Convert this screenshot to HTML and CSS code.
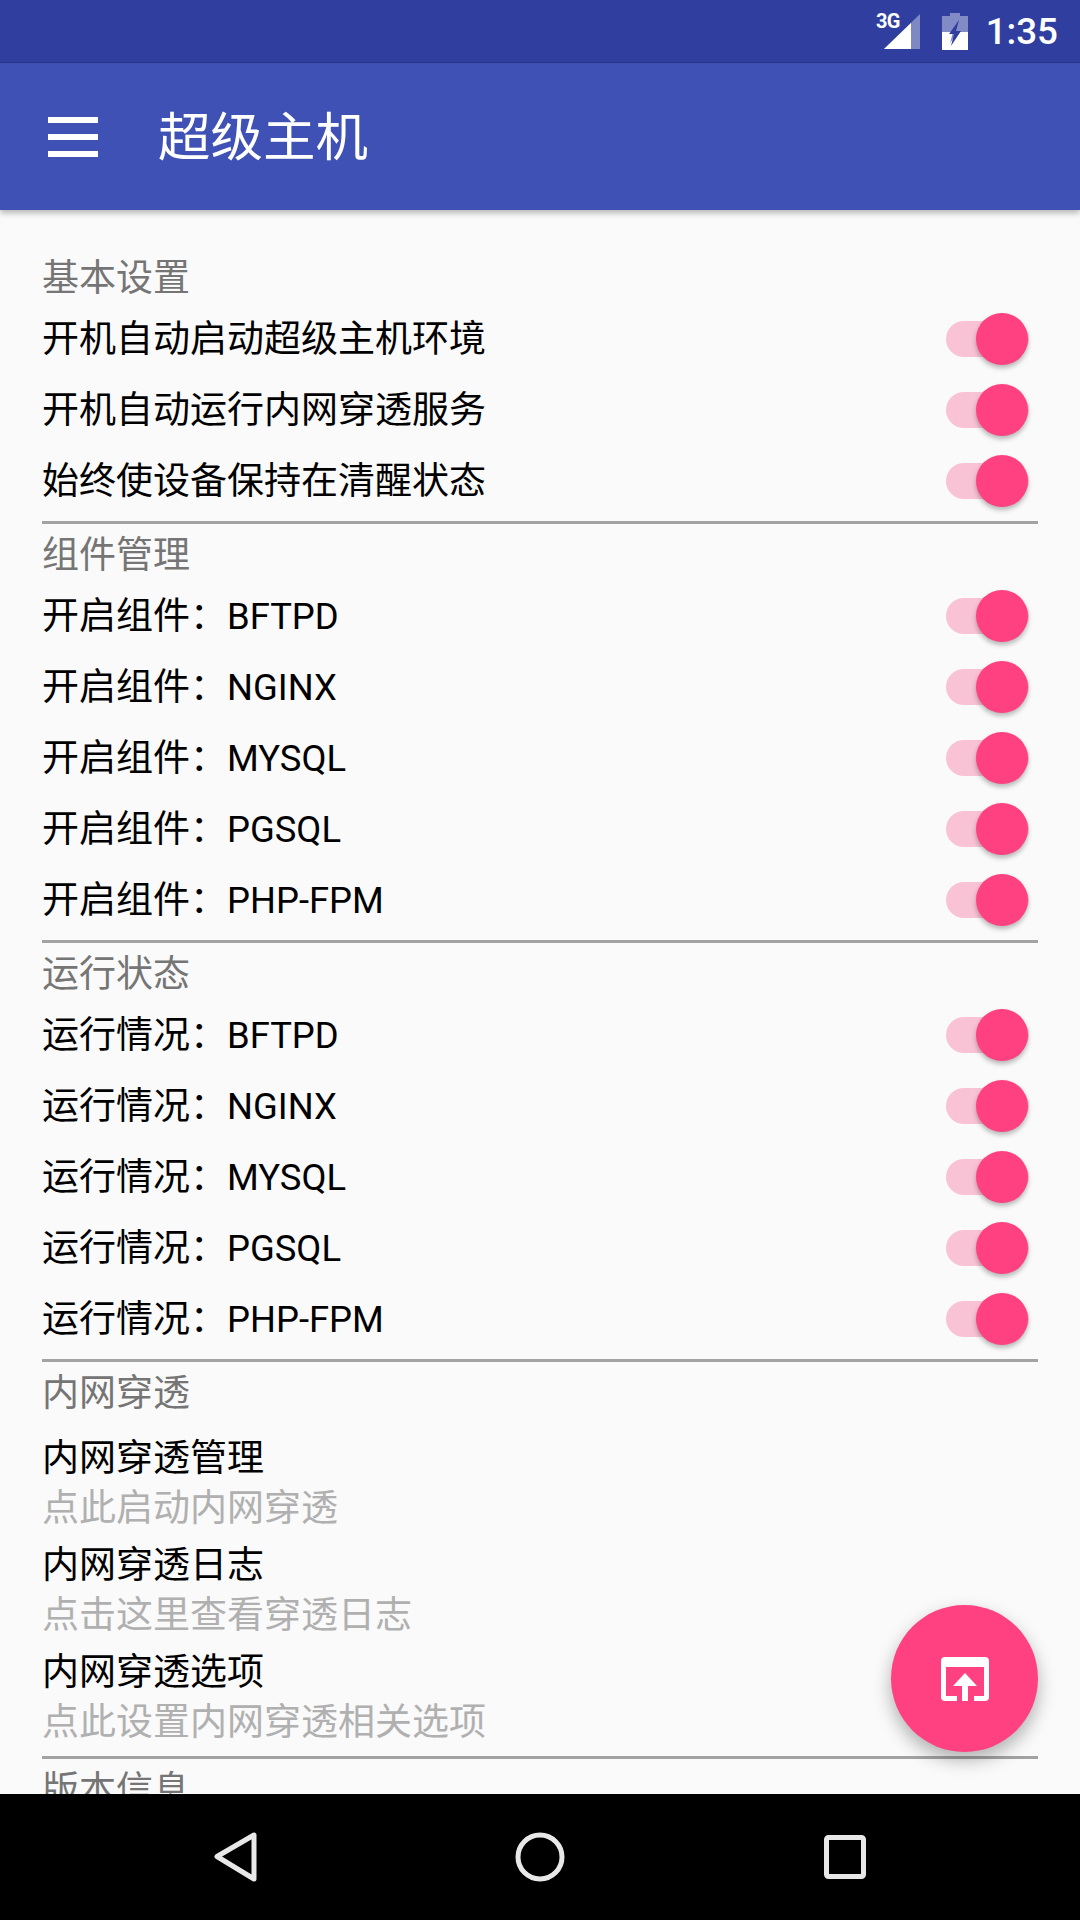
FILE: index.html
```html
<!DOCTYPE html>
<html lang="zh-CN">
<head>
<meta charset="utf-8">
<title>超级主机</title>
<link rel="stylesheet" href="styles.css">
</head>
<body>
<div class="phone">
  <header class="status">
    <span class="net">3G</span>
    <svg class="signal" width="40" height="36" viewBox="0 0 40 36"><path d="M4 36 40 1V36Z" fill="#fff" fill-opacity=".38"/><path d="M4 36 31 10V36Z" fill="#fff"/></svg>
    <svg class="battery" width="26" height="37" viewBox="0 0 26 37"><path d="M8 0h10v3h8v34H0V3h8Z" fill="#fff" fill-opacity=".4"/><path d="M0 19h11l-3 11 8-11h10v18H0Z" fill="#fff"/><path d="M17 7 7 21h5L9 33l10-15h-5l3-11Z" fill="#303f9f"/></svg>
    <span class="time">1:35</span>
  </header>
  <div class="appbar">
    <span class="menu"><i></i><i></i><i></i></span>
    <h1 class="title">超级主机</h1>
  </div>
  <main class="content">
    <section class="group first">
      <h2 class="group-title">基本设置</h2>
      <div class="row"><span class="label">开机自动启动超级主机环境</span><span class="switch"></span></div>
      <div class="row"><span class="label">开机自动运行内网穿透服务</span><span class="switch"></span></div>
      <div class="row"><span class="label">始终使设备保持在清醒状态</span><span class="switch"></span></div>
    </section>
    <section class="group">
      <h2 class="group-title">组件管理</h2>
      <div class="row"><span class="label">开启组件：<span class="latin">BFTPD</span></span><span class="switch"></span></div>
      <div class="row"><span class="label">开启组件：<span class="latin">NGINX</span></span><span class="switch"></span></div>
      <div class="row"><span class="label">开启组件：<span class="latin">MYSQL</span></span><span class="switch"></span></div>
      <div class="row"><span class="label">开启组件：<span class="latin">PGSQL</span></span><span class="switch"></span></div>
      <div class="row"><span class="label">开启组件：<span class="latin">PHP-FPM</span></span><span class="switch"></span></div>
    </section>
    <section class="group">
      <h2 class="group-title">运行状态</h2>
      <div class="row"><span class="label">运行情况：<span class="latin">BFTPD</span></span><span class="switch"></span></div>
      <div class="row"><span class="label">运行情况：<span class="latin">NGINX</span></span><span class="switch"></span></div>
      <div class="row"><span class="label">运行情况：<span class="latin">MYSQL</span></span><span class="switch"></span></div>
      <div class="row"><span class="label">运行情况：<span class="latin">PGSQL</span></span><span class="switch"></span></div>
      <div class="row"><span class="label">运行情况：<span class="latin">PHP-FPM</span></span><span class="switch"></span></div>
    </section>
    <section class="group links">
      <h2 class="group-title">内网穿透</h2>
      <div class="link"><div class="link-name">内网穿透管理</div><div class="link-sub">点此启动内网穿透</div></div>
      <div class="link"><div class="link-name">内网穿透日志</div><div class="link-sub">点击这里查看穿透日志</div></div>
      <div class="link"><div class="link-name">内网穿透选项</div><div class="link-sub">点此设置内网穿透相关选项</div></div>
    </section>
    <section class="group">
      <h2 class="group-title">版本信息</h2>
    </section>
  </main>
  <button class="fab" aria-label="open">
    <svg width="48" height="44" viewBox="0 0 48 44"><path d="M4 0h40a4 4 0 0 1 4 4v36a4 4 0 0 1-4 4H33v-5h10V10H5v29h11v5H4a4 4 0 0 1-4-4V4a4 4 0 0 1 4-4Z" fill="#fff"/><path d="M24 16 36 29H27V44H21V29H12Z" fill="#fff"/></svg>
  </button>
  <nav class="navbar">
    <svg width="1080" height="126" viewBox="0 0 1080 126" fill="none" stroke="#e8e8e8" stroke-width="5" stroke-linejoin="round">
      <path d="M254 41V85L217 62.500Z"/>
      <circle cx="540" cy="63" r="22"/>
      <rect x="826.500" y="43.500" width="37" height="39" rx="2"/>
    </svg>
  </nav>
</div>
</body>
</html>
```
FILE: styles.css
```css
* { box-sizing: border-box; }
html, body { margin: 0; padding: 0; }
body { font-family: Roboto, "Noto Sans CJK SC", sans-serif; background: #000; }
.phone { position: relative; width: 1080px; height: 1920px; display: flex; flex-direction: column; overflow: hidden; background: #fafafa; }

.status { height: 63px; flex: none; background: #303f9f; display: flex; align-items: flex-start; justify-content: flex-end; color: #fff; padding-right: 22px; position: relative; border-bottom: 1px solid #2a3788; }
.net { position: absolute; right: 180px; top: 10px; font-size: 20px; font-weight: 700; line-height: 23px; letter-spacing: -.5px; }
.signal { margin-top: 13px; }
.battery { margin: 13px 0 0 22px; }
.time { margin: 9px 0 0 18px; font-size: 36.750px; font-weight: 500; line-height: 46px; }

.appbar { height: 147px; flex: none; background: #3f51b5; display: flex; align-items: center; padding-left: 48px; position: relative; z-index: 2; box-shadow: 0 3px 6px rgba(0,0,0,.28); }
.menu { width: 50px; display: flex; flex-direction: column; gap: 11px; }
.menu i { display: block; height: 6px; background: #fff; }
.title { margin: 2px 0 0 60px; font-size: 52.500px; font-weight: 400; color: #fff; line-height: 66px; }

.content { flex: 1; min-height: 0; overflow: hidden; padding: 0 42px; }
.group { border-bottom: 3px solid #a3a3a3; padding-bottom: 5px; }
.group:last-child { border-bottom: 0; }
.group.first { padding-top: 37px; }
.group.links { padding-bottom: 8px; }
.group-title { margin: 7px 0 -1px; font-size: 37px; font-weight: 400; color: #757575; line-height: 50px; }

.row { height: 71px; display: flex; align-items: center; justify-content: space-between; font-size: 37px; color: #000; }
.label { margin-bottom: 5px; }
.latin { font-size: 36.400px; }
.switch { position: relative; width: 83px; height: 36px; border-radius: 18px; background: #f9c3d5; margin-right: 9px; }
.switch::after { content: ""; position: absolute; right: 1px; top: -8px; width: 52px; height: 52px; border-radius: 50%; background: #ff4081; box-shadow: 0 3px 5px rgba(0,0,0,.28); }

.links .group-title { margin-bottom: 14px; }
.link { padding-bottom: 6px; }
.link:last-child { padding-bottom: 0; }
.link-name { font-size: 37px; line-height: 51px; color: #000; }
.link-sub { font-size: 37px; line-height: 50px; color: #b0b0b0; }

.fab { position: absolute; left: 891px; top: 1605px; width: 147px; height: 147px; border: 0; padding: 0; border-radius: 50%; background: #ff4081; display: flex; align-items: center; justify-content: center; box-shadow: 0 8px 18px rgba(0,0,0,.3); z-index: 3; }
.navbar { height: 126px; flex: none; background: #000; position: relative; z-index: 4; }
.navbar svg { display: block; }
```
